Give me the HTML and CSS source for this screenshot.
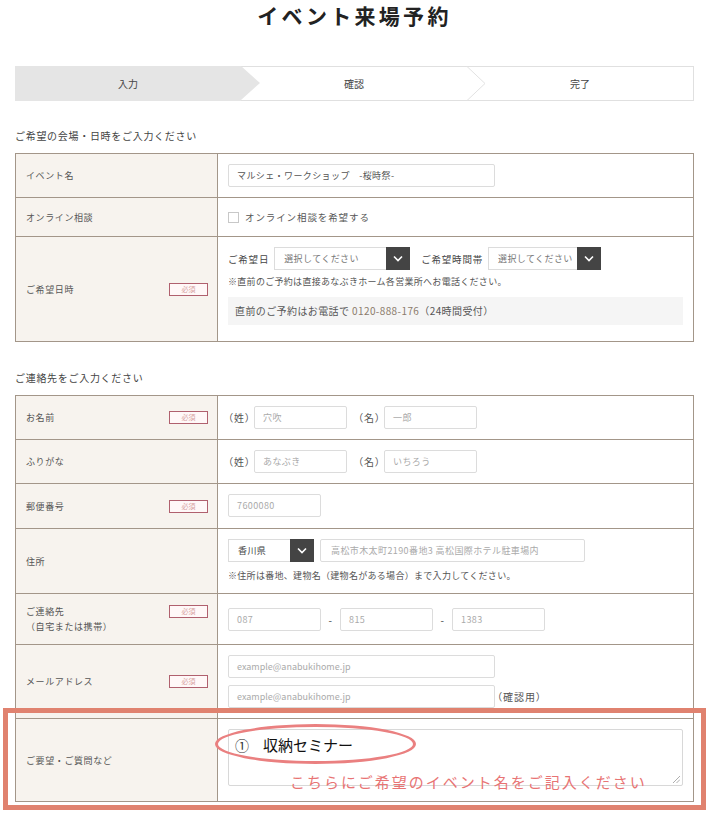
FILE: index.html
```html
<!DOCTYPE html>
<html lang="ja">
<head>
    <meta charset="UTF-8">
    <meta name="viewport" content="width=device-width, initial-scale=1.0">
    <link rel="stylesheet" href="styles.css">
</head>
<body>
    <div class="page">
        <h1 class="title">イベント来場予約</h1>

        <div class="steps">
            <div class="step step-current">入力</div>
            <div class="step">確認
                <svg class="step-arrow" width="20" height="35" viewBox="0 0 20 35"><polyline points="0.5,0 19,17.5 0.5,35" fill="none" stroke="#e2e2e2" stroke-width="1"/></svg>
            </div>
            <div class="step">完了</div>
        </div>

        <div class="section-title">ご希望の会場・日時をご入力ください</div>
        <table class="form-table">
            <tr>
                <th><div class="label"><span>イベント名</span></div></th>
                <td>
                    <div class="input w-266">マルシェ・ワークショップ　-桜時祭-</div>
                </td>
            </tr>
            <tr>
                <th><div class="label"><span>オンライン相談</span></div></th>
                <td>
                    <label class="check"><span class="check-box"></span>オンライン相談を希望する</label>
                </td>
            </tr>
            <tr>
                <th><div class="label"><span>ご希望日時</span><span class="required">必須</span></div></th>
                <td class="date-cell">
                    <div class="inline-row">
                        <span class="inline-label">ご希望日</span>
                        <div class="select w-135"><span>選択してください</span><span class="select-btn"><svg width="10" height="7" viewBox="0 0 10 7"><polyline points="1,1.5 5,5.5 9,1.5" fill="none" stroke="#fff" stroke-width="1.6"/></svg></span></div>
                        <span class="inline-label gap-left">ご希望時間帯</span>
                        <div class="select w-112"><span>選択してください</span><span class="select-btn"><svg width="10" height="7" viewBox="0 0 10 7"><polyline points="1,1.5 5,5.5 9,1.5" fill="none" stroke="#fff" stroke-width="1.6"/></svg></span></div>
                    </div>
                    <p class="note">※直前のご予約は直接あなぶきホーム各営業所へお電話ください。</p>
                    <div class="tel-box">直前のご予約はお電話で <span class="tel">0120-888-176</span>（24時間受付）</div>
                </td>
            </tr>
        </table>

        <div class="section-title second">ご連絡先をご入力ください</div>
        <table class="form-table">
            <tr>
                <th><div class="label"><span>お名前</span><span class="required">必須</span></div></th>
                <td>
                    <div class="inline-row">
                        <span class="paren">（姓）</span><div class="input w-93 placeholder">穴吹</div>
                        <span class="paren gap-name">（名）</span><div class="input w-93 placeholder">一郎</div>
                    </div>
                </td>
            </tr>
            <tr>
                <th><div class="label"><span>ふりがな</span></div></th>
                <td>
                    <div class="inline-row">
                        <span class="paren">（姓）</span><div class="input w-93 placeholder">あなぶき</div>
                        <span class="paren gap-name">（名）</span><div class="input w-93 placeholder">いちろう</div>
                    </div>
                </td>
            </tr>
            <tr>
                <th><div class="label"><span>郵便番号</span><span class="required">必須</span></div></th>
                <td class="tall">
                    <div class="input w-93 placeholder">7600080</div>
                </td>
            </tr>
            <tr>
                <th><div class="label"><span>住所</span></div></th>
                <td class="addr-cell">
                    <div class="inline-row">
                        <div class="select w-85"><span class="dark">香川県</span><span class="select-btn"><svg width="10" height="7" viewBox="0 0 10 7"><polyline points="1,1.5 5,5.5 9,1.5" fill="none" stroke="#fff" stroke-width="1.6"/></svg></span></div>
                        <div class="input w-265 placeholder addr">高松市木太町2190番地3 高松国際ホテル駐車場内</div>
                    </div>
                    <p class="note addr-note">※住所は番地、建物名（建物名がある場合）まで入力してください。</p>
                </td>
            </tr>
            <tr>
                <th><div class="label top"><span>ご連絡先<br>（自宅または携帯）</span><span class="required">必須</span></div></th>
                <td>
                    <div class="inline-row">
                        <div class="input w-93 placeholder">087</div>
                        <span class="dash">-</span>
                        <div class="input w-93 placeholder">815</div>
                        <span class="dash">-</span>
                        <div class="input w-93 placeholder">1383</div>
                    </div>
                </td>
            </tr>
            <tr>
                <th><div class="label"><span>メールアドレス</span><span class="required">必須</span></div></th>
                <td>
                    <div class="input w-266 placeholder mail">example@anabukihome.jp</div>
                    <div class="inline-row mail-row">
                        <div class="input w-266 placeholder mail">example@anabukihome.jp</div>
                        <span class="paren confirm">（確認用）</span>
                    </div>
                </td>
            </tr>
            <tr>
                <th><div class="label"><span>ご要望・ご質問など</span></div></th>
                <td class="request-cell">
                    <div class="textarea">
                        <span class="circle"></span>
                        <div class="typed"><span class="num">①</span>収納セミナー</div>
                        <div class="hint">こちらにご希望のイベント名をご記入ください</div>
                        <svg class="grip" width="8" height="8" viewBox="0 0 8 8"><line x1="1" y1="8" x2="8" y2="1" stroke="#999" stroke-width="0.8"/><line x1="4.5" y1="8" x2="8" y2="4.5" stroke="#999" stroke-width="0.8"/></svg>
                    </div>
                </td>
            </tr>
        </table>

        <div class="highlight"></div>
    </div>
</body>
</html>
```

FILE: styles.css
```css
body {
    margin: 0;
    background: #fff;
    font-family: "Noto Sans CJK JP", "Noto Sans", sans-serif;
    color: #555;
}

.page {
    position: relative;
    width: 679px;
    margin-left: 15px;
    height: 814px;
}

.title {
    margin: 0;
    padding-top: 2px;
    text-align: center;
    font-size: 21px;
    line-height: 26px;
    font-weight: bold;
    letter-spacing: 3.3px;
    color: #222;
}

.steps {
    display: flex;
    height: 35px;
    margin-top: 38px;
    box-sizing: border-box;
    border: 1px solid #e0e0e0;
}

.step {
    position: relative;
    flex: 1;
    display: flex;
    align-items: center;
    justify-content: center;
    font-size: 10px;
    color: #444;
}

.step-current {
    background: #e5e5e5;
    margin: -1px 0 -1px -1px;
}

.step-current::after {
    content: "";
    position: absolute;
    left: 100%;
    top: 0;
    border-left: 19px solid #e5e5e5;
    border-top: 17.5px solid transparent;
    border-bottom: 17.5px solid transparent;
}

.step-arrow {
    position: absolute;
    right: -19px;
    top: -1px;
}

.section-title {
    margin-top: 27px;
    margin-bottom: 9px;
    font-size: 10px;
    line-height: 16px;
    letter-spacing: 0.7px;
    color: #444;
}

.section-title.second {
    margin-top: 28px;
}

.form-table {
    width: 100%;
    border-collapse: collapse;
}

.form-table th,
.form-table td {
    border: 1px solid #a39689;
    vertical-align: middle;
    text-align: left;
    font-weight: normal;
}

.form-table th {
    width: 182px;
    background: #f7f3ee;
    padding: 10px 9px 10px 10px;
}

.form-table td {
    padding: 10px 10px;
    font-size: 9px;
    letter-spacing: 0.4px;
}

.form-table td.tall {
    padding-bottom: 11px;
}

.form-table td.addr-cell {
    padding-bottom: 11px;
}

.label {
    display: flex;
    justify-content: space-between;
    align-items: center;
    font-size: 9px;
    line-height: 15px;
    letter-spacing: 0.6px;
    color: #555;
}

.label.top {
    align-items: flex-start;
}

.label.top .required {
    margin-top: 1px;
}

.required {
    width: 39px;
    height: 13px;
    box-sizing: border-box;
    border: 1px solid #b0606e;
    background: #fff8f8;
    color: #d7a2a2;
    font-size: 7px;
    line-height: 11px;
    text-align: center;
    letter-spacing: 0;
}

.input {
    height: 23px;
    box-sizing: border-box;
    border: 1px solid #dcdcdc;
    border-radius: 2px;
    background: #fff;
    padding: 0 8px;
    font-size: 9px;
    line-height: 21px;
    color: #555;
    white-space: nowrap;
    overflow: hidden;
}

.input.placeholder {
    color: #aaa;
}

.input.addr {
    margin-left: 6px;
    padding-left: 10px;
}

.input.mail {
    letter-spacing: 0;
}

.w-266 { width: 267px; }
.w-265 { width: 265px; }
.w-93 { width: 93px; }
.w-85 { width: 86px; }
.w-135 { width: 136px; }
.w-112 { width: 113px; }

.inline-row {
    display: flex;
    align-items: center;
}

.inline-label {
    font-size: 9.5px;
    letter-spacing: 0.8px;
    color: #444;
    margin-right: 5px;
}

.gap-left {
    margin-left: 11px;
}

.paren {
    font-size: 10px;
    font-feature-settings: "palt";
    letter-spacing: 1px;
    color: #555;
    width: 26px;
}

.gap-name {
    margin-left: 11px;
}

.paren.confirm {
    width: auto;
    margin-left: 2px;
}

.dash {
    width: 19px;
    text-align: center;
    font-size: 10px;
    color: #444;
}

.mail-row {
    margin-top: 7px;
}

.check {
    display: flex;
    align-items: center;
    font-size: 9.5px;
    line-height: 18px;
    letter-spacing: 0.9px;
    color: #555;
}

.check-box {
    width: 11px;
    height: 11px;
    box-sizing: border-box;
    border: 1px solid #c8c8c8;
    background: #fff;
    margin-right: 6px;
}

.select {
    display: flex;
    justify-content: space-between;
    align-items: stretch;
    height: 23px;
    box-sizing: border-box;
    border: 1px solid #dcdcdc;
    background: #fff;
    font-size: 9px;
    color: #777;
}

.select > span:first-child {
    padding-left: 9px;
    line-height: 21px;
}

.select .dark {
    color: #444;
}

.select-btn {
    width: 24px;
    margin: -1px -1px -1px 0;
    background: #444;
    display: flex;
    align-items: center;
    justify-content: center;
}

.note {
    margin: 6px 0 0;
    font-size: 9px;
    line-height: 12px;
    letter-spacing: 0.3px;
    color: #555;
}

.addr-note {
    margin-top: 8px;
}

.tel-box {
    margin-top: 9px;
    margin-bottom: 6px;
    height: 28px;
    width: 455px;
    background: #f5f5f5;
    padding-left: 7px;
    box-sizing: border-box;
    font-size: 10px;
    line-height: 28px;
    letter-spacing: 0.4px;
    color: #555;
}

.tel {
    color: #8b7b6c;
}

.request-cell {
    padding-bottom: 15px !important;
}

.textarea {
    position: relative;
    width: 455px;
    height: 57px;
    box-sizing: border-box;
    border: 1px solid #d8d8d8;
    border-radius: 2px;
    background: #fff;
}

.typed {
    padding: 5px 0 0 6px;
    font-size: 15px;
    line-height: 20px;
    color: #111;
    letter-spacing: 0;
}

.typed .num {
    font-size: 14px;
    color: #333;
    margin-right: 14px;
}

.circle {
    position: absolute;
    left: -14px;
    top: -6px;
    width: 201px;
    height: 40px;
    box-sizing: border-box;
    border: 3px solid #ea8080;
    border-radius: 50%;
}

.hint {
    position: absolute;
    left: 61px;
    top: 43px;
    font-size: 15px;
    line-height: 18px;
    letter-spacing: 2px;
    color: #e87474;
    white-space: nowrap;
}

.grip {
    position: absolute;
    right: 2px;
    bottom: 2px;
}

.highlight {
    position: absolute;
    left: -12px;
    top: 708px;
    width: 703px;
    height: 102px;
    box-sizing: border-box;
    border: 5px solid #e0826f;
    pointer-events: none;
}
```
